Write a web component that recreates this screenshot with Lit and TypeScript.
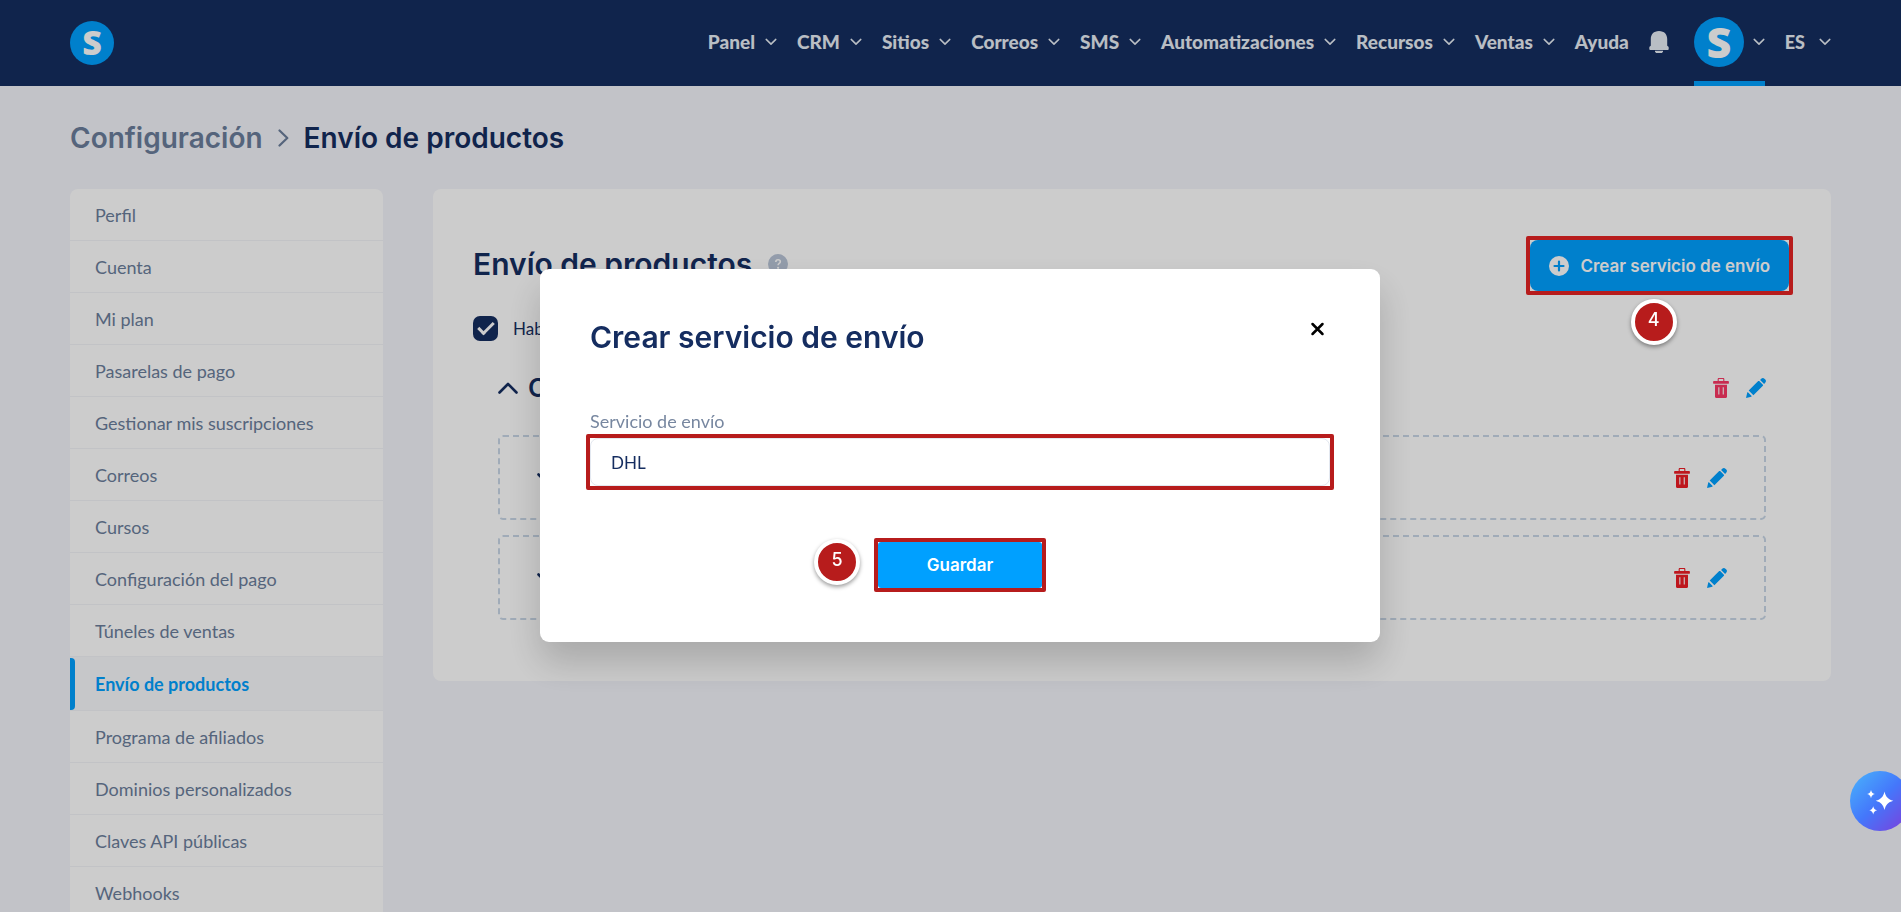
import { LitElement, html, css, svg } from "lit";
import { customElement, state } from "lit/decorators.js";
import { classMap } from "lit/directives/class-map.js";

const NAV_ITEMS = ["Panel", "CRM", "Sitios", "Correos", "SMS", "Automatizaciones", "Recursos", "Ventas"];

const SIDE_ITEMS = [
  "Perfil",
  "Cuenta",
  "Mi plan",
  "Pasarelas de pago",
  "Gestionar mis suscripciones",
  "Correos",
  "Cursos",
  "Configuración del pago",
  "Túneles de ventas",
  "Envío de productos",
  "Programa de afiliados",
  "Dominios personalizados",
  "Claves API públicas",
  "Webhooks",
];

const chevronDown = html`<svg class="chev" viewBox="0 0 12 8" aria-hidden="true">
  <path d="M1.2 1.4 6 6.1l4.8-4.7" fill="none" stroke="currentColor" stroke-width="1.5" stroke-linecap="round" stroke-linejoin="round" />
</svg>`;

const trashShape = svg`
  <path d="M5.2 3V1.2c0-.5.3-.8.8-.8h4c.5 0 .8.3.8.8V3" fill="none" stroke="currentColor" stroke-width="1.1" />
  <path fill="currentColor" fill-rule="evenodd" d="M1 3h14c.6 0 .9.3.9.8v1.4c0 .3-.2.5-.5.5H.6c-.3 0-.5-.2-.5-.5V3.800c0-.5.3-.8.900-.8ZM2 6.800h12v12c0 .7-.5 1.200-1.200 1.200H3.200c-.7 0-1.200-.5-1.200-1.200v-12Zm3.300 2.400v7.200h1.100V9.200H5.300Zm4.400 0v7.200h1.100V9.200H9.700Z" />`;

const pencilShape = svg`
  <g fill="currentColor">
    <path d="M0 20l1.200-5.200c.2-.5.600-.6 1-.2l3.200 3.200c.4.4.3.800-.2 1L0 20Z" />
    <path d="M2.700 12.600 12.200 3.100c.3-.3.700-.3 1 0l3.700 3.700c.3.300.3.700 0 1l-9.500 9.500Z" />
    <path d="m14.100 1.900 1.100-1.100c1-1 2.300-1 3.200-.1l.9.900c.9.900.9 2.200-.1 3.200l-1.100 1.100Z" />
  </g>`;

/** Pair of delete / edit buttons shown at the right end of a shipping row. */
@customElement("row-actions")
class RowActions extends LitElement {
  static styles = css`
    :host {
      display: flex;
      align-items: center;
      gap: 17px;
    }
    .act {
      display: block;
      padding: 0;
      border: 0;
      background: none;
      cursor: pointer;
    }
    .trash {
      color: var(--trash-color, #ee1c25);
    }
    .edit {
      color: #00a0ff;
    }
    svg {
      display: block;
      height: 20px;
    }
    .trash svg {
      width: 16px;
    }
    .edit svg {
      width: 20px;
    }
  `;

  render() {
    return html`
      <button class="act trash" aria-label="Eliminar"><svg viewBox="0 0 16 20">${trashShape}</svg></button>
      <button class="act edit" aria-label="Editar"><svg viewBox="0 0 20 20">${pencilShape}</svg></button>
    `;
  }
}

@customElement("app-root")
class AppRoot extends LitElement {
  @state() private enabled = true;
  @state() private service = "DHL";

  static styles = css`
    :host {
      display: block;
      height: 100vh;
      overflow: hidden;
      background: #f3f4fa;
      color: #152d60;
      font-family: Lato, sans-serif;
      font-size: 17px;
      line-height: 24px;
    }
    * {
      box-sizing: border-box;
    }
    a {
      color: inherit;
      text-decoration: none;
    }
    button,
    input {
      font: inherit;
      color: inherit;
    }
    h1,
    h2,
    h3 {
      margin: 0;
      font-family: Inter, sans-serif;
      font-weight: 600;
    }
    svg {
      display: block;
      flex: none;
    }

    .topbar {
      display: flex;
      align-items: center;
      justify-content: space-between;
      height: 86px;
      padding: 0 70px;
      background: #152d60;
      color: #e8eef5;
    }
    .logo {
      width: 44px;
      height: 44px;
      overflow: visible;
    }
    .logo-letter {
      font-family: "Open Sans", sans-serif;
      font-weight: 800;
      fill: #fff;
    }
    .nav {
      display: flex;
      align-items: center;
      align-self: stretch;
      gap: 20px;
      font-weight: 900;
      font-size: 19px;
      padding-bottom: 2px;
    }
    .nav-link {
      display: flex;
      align-items: center;
      gap: 10px;
    }
    .chev {
      width: 12px;
      height: 8px;
    }
    .bell {
      width: 20px;
      height: 24px;
    }
    .account {
      position: relative;
      display: flex;
      align-items: center;
      align-self: stretch;
      gap: 9px;
      margin-left: 5px;
    }
    .account::after {
      content: "";
      position: absolute;
      left: 0;
      right: 0;
      bottom: -2px;
      height: 5px;
      background: #00a0ff;
    }
    .avatar {
      width: 50px;
      height: 50px;
      overflow: visible;
    }
    .lang {
      gap: 14px;
      font-size: 18px;
    }

    .content {
      padding: 0 70px;
    }
    .crumbs {
      display: flex;
      align-items: center;
      gap: 15px;
      padding: 34px 0 33px;
      font: 560 28px/36px Inter, sans-serif;
    }
    .crumb-parent {
      color: #6b7e9b;
    }
    .crumb-sep {
      width: 11px;
      height: 18px;
      color: #6b7e9b;
    }
    .columns {
      display: grid;
      grid-template-columns: 313px 1fr;
      gap: 50px;
      align-items: start;
    }
    .side {
      overflow: hidden;
      border-radius: 8px;
      background: #fff;
      color: #6b7e9b;
      font-size: 18px;
    }
    .side-link {
      display: flex;
      align-items: center;
      height: 52px;
      padding-left: 25px;
      border-bottom: 1px solid #f3f4f8;
    }
    .side-link.active {
      position: relative;
      height: 54px;
      background: #f8f9fc;
      color: #00a0ff;
      font-weight: 700;
    }
    .side-link.active::before {
      content: "";
      position: absolute;
      left: 0;
      top: 1px;
      bottom: 0;
      width: 5px;
      border-radius: 0 4px 4px 0;
      background: #00a0ff;
    }

    .panel {
      padding: 51px 42px 61px 40px;
      border-radius: 8px;
      background: #fff;
    }
    .panel-head {
      display: flex;
      align-items: center;
      justify-content: space-between;
    }
    .panel-title {
      display: flex;
      align-items: center;
      gap: 16px;
      margin-bottom: 4px;
      font-size: 30px;
      line-height: 38px;
    }
    .help {
      width: 20px;
      height: 20px;
    }
    .marked {
      position: relative;
    }
    .mark {
      position: absolute;
      inset: -4px;
      z-index: 3;
      border: 4px solid #b71c1c;
      border-radius: 2px;
      pointer-events: none;
    }
    .step {
      position: absolute;
      z-index: 3;
      display: flex;
      justify-content: center;
      width: 46px;
      height: 46px;
      border: 4px solid #fff;
      border-radius: 50%;
      background: #b71c1c;
      box-shadow: 0 2px 4px rgba(0, 0, 0, 0.4);
      color: #fff;
      font: 500 18px/34px Inter, sans-serif;
    }
    .step.below {
      top: calc(100% + 8px);
      left: calc(50% - 29px);
    }
    .step.before {
      top: calc(50% - 26px);
      right: calc(100% + 18px);
    }
    .create {
      display: flex;
      align-items: center;
      gap: 11px;
      height: 51px;
      padding: 0 19px;
      border: 0;
      border-radius: 8px;
      background: #00a0ff;
      color: #fff;
      font: 560 17px/24px Inter, sans-serif;
    }
    .plus {
      width: 20px;
      height: 20px;
    }
    .enable {
      display: flex;
      align-items: center;
      gap: 15px;
      margin-top: 25px;
    }
    .tick {
      appearance: none;
      width: 25px;
      height: 25px;
      margin: 0;
      border-radius: 7px;
      background: #152d60;
      display: grid;
      place-items: center;
    }
    .tick::after {
      content: "";
      width: 13px;
      height: 6px;
      margin-top: -4px;
      border: solid #fff;
      border-width: 0 0 3px 3px;
      transform: rotate(-45deg);
    }
    .group {
      padding: 0 23px 0 25px;
    }
    .group-head {
      display: flex;
      align-items: center;
      gap: 10px;
      margin: 29px 0 30px;
      height: 35px;
      --trash-color: #fa3764;
    }
    .group-name {
      flex: 1;
      font-size: 26px;
      line-height: 35px;
    }
    .fold {
      width: 20px;
      height: 12px;
    }
    .rate {
      display: flex;
      align-items: center;
      justify-content: space-between;
      height: 85px;
      padding: 0 37px;
      border: 2px dashed #c8d6e6;
      border-radius: 5px;
    }
    .rate + .rate {
      margin-top: 15px;
    }
    .rate-fold {
      width: 16px;
      height: 10px;
    }

    .overlay {
      position: fixed;
      inset: 0;
      z-index: 2;
      display: flex;
      justify-content: center;
      align-items: flex-start;
      padding: 269px 0 0 19px;
      background: rgba(0, 0, 0, 0.2);
    }
    .modal {
      z-index: 4;
      width: 840px;
      padding: 49px 50px 54px;
      border-radius: 9px;
      background: #fff;
      box-shadow: 0 20px 36px rgba(0, 0, 0, 0.18);
    }
    .modal-head {
      display: flex;
      align-items: center;
      justify-content: space-between;
      padding-right: 5px;
    }
    .modal-title {
      font-size: 30px;
      line-height: 38px;
    }
    .close {
      padding: 0;
      border: 0;
      background: none;
      color: #000;
      margin-bottom: 16px;
    }
    .close svg {
      width: 15px;
      height: 14px;
    }
    .field-label {
      display: block;
      margin: 53px 0 5px;
      color: #7787a0;
      font-size: 18px;
    }
    .field {
      display: block;
      width: 100%;
      height: 48px;
      padding: 0 20px;
      border: 1px solid #e3e8f0;
      border-radius: 8px;
      background: #fff;
      outline: none;
    }
    .save-wrap {
      width: 164px;
      margin: 56px auto 0;
    }
    .save {
      width: 100%;
      height: 46px;
      border: 0;
      border-radius: 3px;
      background: #00a0ff;
      color: #fff;
      font: 600 17px/24px Inter, sans-serif;
    }
    .assistant {
      position: fixed;
      right: -9px;
      bottom: 81px;
      z-index: 5;
      width: 60px;
      height: 60px;
      padding: 0 0 0 16px;
      border: 0;
      border-radius: 50%;
      background: linear-gradient(135deg, #48a9fb 10%, #4477fb 50%, #7447e0 90%);
    }
    .assistant svg {
      width: 28px;
      height: 28px;
    }
  `;

  private logo(cls: string, letterSize: number, baseline: number) {
    return html`<svg class=${cls} viewBox="0 0 44 44" role="img" aria-label="S">
      <circle cx="22" cy="22" r="22" fill="#00a0ff" />
      <text class="logo-letter" x="22" y=${baseline} font-size=${letterSize} text-anchor="middle">S</text>
    </svg>`;
  }

  private header() {
    return html`<header class="topbar">
      <a href="#">${this.logo("logo", 34, 34)}</a>
      <nav class="nav">
        ${NAV_ITEMS.map((t) => html`<a class="nav-link" href="#">${t}${chevronDown}</a>`)}
        <a class="nav-link" href="#">Ayuda</a>
        <svg class="bell" viewBox="0 0 20 24">
          <path fill="currentColor" d="M10 1C4.600 1 1.800 4.600 1.800 9v6.600C1.800 16.200.3 16.500.3 17.600V19c0 .6.3.9.9.9h17.600c.6 0 .9-.3.9-.9v-1.400c0-1.100-1.500-1.400-1.500-2V9C18.200 4.600 15.400 1 10 1Z" />
          <path fill="currentColor" d="M6 20.800h8v1.400h-.9v.9H6.900v-.9H6Z" />
        </svg>
        <a class="account" href="#">${this.logo("avatar", 38, 36)}${chevronDown}</a>
        <a class="nav-link lang" href="#">ES${chevronDown}</a>
      </nav>
    </header>`;
  }

  private panel() {
    return html`<main class="panel">
      <div class="panel-head">
        <h1 class="panel-title">
          Envío de productos
          <svg class="help" viewBox="0 0 20 20">
            <circle cx="10" cy="10" r="10" fill="#b8c4d6" />
            <path d="M7.800 8c0-1.400 1-2.200 2.300-2.200s2.200.8 2.200 2c0 1.700-2.200 1.700-2.200 3.500" fill="none" stroke="#fff" stroke-width="1.600" />
            <circle cx="10.100" cy="13.800" r="1.100" fill="#fff" />
          </svg>
        </h1>
        <div class="marked">
          <button class="create">
            <svg class="plus" viewBox="0 0 20 20">
              <circle cx="10" cy="10" r="10" fill="#fff" />
              <path d="M10 5.500v9M5.500 10h9" stroke="#00a0ff" stroke-width="2.200" stroke-linecap="round" />
            </svg>
            Crear servicio de envío
          </button>
          <span class="mark"></span>
          <span class="step below">4</span>
        </div>
      </div>
      <label class="enable">
        <input
          class="tick"
          type="checkbox"
          .checked=${this.enabled}
          @change=${(e: Event) => (this.enabled = (e.target as HTMLInputElement).checked)}
        />
        Habilitar envío
      </label>
      <section class="group">
        <div class="group-head">
          <svg class="fold" viewBox="0 0 20 12">
            <path d="M1.500 10.500 10 2l8.500 8.500" fill="none" stroke="currentColor" stroke-width="2.600" stroke-linecap="round" stroke-linejoin="round" />
          </svg>
          <h2 class="group-name">Correos</h2>
          <row-actions></row-actions>
        </div>
        ${[0, 1].map(
          () => html`<div class="rate">
            <svg class="rate-fold" viewBox="0 0 16 10">
              <path d="M1.500 1.500 8 8l6.500-6.500" fill="none" stroke="currentColor" stroke-width="2.600" stroke-linecap="round" stroke-linejoin="round" />
            </svg>
            <row-actions></row-actions>
          </div>`
        )}
      </section>
    </main>`;
  }

  private modal() {
    return html`<div class="overlay">
      <form class="modal" role="dialog" aria-labelledby="dlg" @submit=${(e: Event) => e.preventDefault()}>
        <div class="modal-head">
          <h2 class="modal-title" id="dlg">Crear servicio de envío</h2>
          <button class="close" type="button" aria-label="Cerrar">
            <svg viewBox="0 0 15 14">
              <path d="M2.500 2l10 10M12.500 2l-10 10" stroke="currentColor" stroke-width="2.500" stroke-linecap="round" />
            </svg>
          </button>
        </div>
        <label class="field-label" for="service">Servicio de envío</label>
        <div class="marked">
          <input
            class="field"
            id="service"
            type="text"
            .value=${this.service}
            @input=${(e: Event) => (this.service = (e.target as HTMLInputElement).value)}
          />
          <span class="mark"></span>
        </div>
        <div class="marked save-wrap">
          <button class="save" type="submit">Guardar</button>
          <span class="mark"></span>
          <span class="step before">5</span>
        </div>
      </form>
    </div>`;
  }

  render() {
    return html`
      ${this.header()}
      <div class="content">
        <nav class="crumbs">
          <a class="crumb-parent" href="#">Configuración</a>
          <svg class="crumb-sep" viewBox="0 0 11 18">
            <path d="M1.500 1.500 9.300 9l-7.800 7.500" fill="none" stroke="currentColor" stroke-width="2.200" stroke-linecap="round" stroke-linejoin="round" />
          </svg>
          <span>Envío de productos</span>
        </nav>
        <div class="columns">
          <nav class="side">
            ${SIDE_ITEMS.map(
              (t) => html`<a class=${classMap({ "side-link": true, active: t === "Envío de productos" })} href="#">${t}</a>`
            )}
          </nav>
          ${this.panel()}
        </div>
      </div>
      ${this.modal()}
      <button class="assistant" aria-label="Asistente">
        <svg viewBox="0 0 28 28" fill="#fff">
          <path d="M18.500 4.500c1.300 5.400 3.400 7.700 8.800 9.300-5.400 1.600-7.500 3.900-8.800 9.300-1.300-5.400-3.400-7.700-8.800-9.300 5.400-1.600 7.500-3.900 8.800-9.300Z" />
          <path d="M5 3c.6 2.400 1.500 3.400 3.900 4.100C6.500 7.800 5.600 8.800 5 11.200c-.6-2.400-1.500-3.400-3.900-4.100C3.500 6.400 4.400 5.400 5 3Z" />
          <path d="M7.200 19.200c.6 2.400 1.500 3.400 3.900 4.100-2.400.7-3.300 1.700-3.900 4.100-.6-2.400-1.500-3.400-3.900-4.100 2.400-.7 3.300-1.700 3.900-4.100Z" />
        </svg>
      </button>
    `;
  }
}
